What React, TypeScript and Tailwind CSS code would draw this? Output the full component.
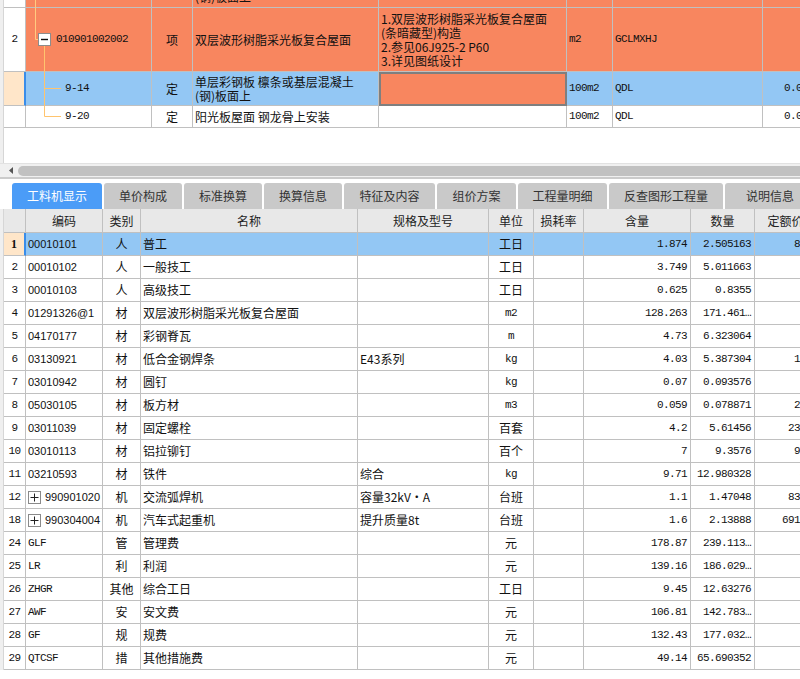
import React from 'react';

const cjk = "font-['Noto_Sans_CJK_SC',sans-serif] text-[12px]";
const mono = "font-['Liberation_Mono',monospace] text-[11px] tracking-[-0.6px]";
const sans = "font-['Liberation_Sans',sans-serif] text-[11px]";
const cell = 'shrink-0 h-full border-r border-b border-[#c0c0c0] flex items-center overflow-hidden whitespace-nowrap';

type Item = {
  n: string;
  code: string;
  latin?: boolean;
  plus?: boolean;
  cat: string;
  name: string;
  spec?: string;
  unit: string;
  amt: string;
  qty: string;
  price: string;
};

const items: Item[] = [
  { n: '1', code: '00010101', cat: '人', name: '普工', unit: '工日', amt: '1.874', qty: '2.505163', price: '87.1' },
  { n: '2', code: '00010102', cat: '人', name: '一般技工', unit: '工日', amt: '3.749', qty: '5.011663', price: '13' },
  { n: '3', code: '00010103', cat: '人', name: '高级技工', unit: '工日', amt: '0.625', qty: '0.8355', price: '162' },
  { n: '4', code: '01291326@1', cat: '材', name: '双层波形树脂采光板复合屋面', unit: 'm2', amt: '128.263', qty: '171.461…', price: '40' },
  { n: '5', code: '04170177', cat: '材', name: '彩钢脊瓦', unit: 'm', amt: '4.73', qty: '6.323064', price: '25' },
  { n: '6', code: '03130921', cat: '材', name: '低合金钢焊条', spec: 'E43系列', unit: 'kg', amt: '4.03', qty: '5.387304', price: '14.2' },
  { n: '7', code: '03010942', cat: '材', name: '圆钉', unit: 'kg', amt: '0.07', qty: '0.093576', price: '7' },
  { n: '8', code: '05030105', cat: '材', name: '板方材', unit: 'm3', amt: '0.059', qty: '0.078871', price: '2000' },
  { n: '9', code: '03011039', cat: '材', name: '固定螺栓', unit: '百套', amt: '4.2', qty: '5.61456', price: '230.0' },
  { n: '10', code: '03010113', cat: '材', name: '铝拉铆钉', unit: '百个', amt: '7', qty: '9.3576', price: '9.50' },
  { n: '11', code: '03210593', cat: '材', name: '铁件', spec: '综合', unit: 'kg', amt: '9.71', qty: '12.980328', price: '4.5' },
  { n: '12', code: '990901020', plus: true, cat: '机', name: '交流弧焊机', spec: '容量32kV·A', unit: '台班', amt: '1.1', qty: '1.47048', price: '83.27' },
  { n: '18', code: '990304004', plus: true, cat: '机', name: '汽车式起重机', spec: '提升质量8t', unit: '台班', amt: '1.6', qty: '2.13888', price: '691.61' },
  { n: '24', code: 'GLF', latin: true, cat: '管', name: '管理费', unit: '元', amt: '178.87', qty: '239.113…', price: '1' },
  { n: '25', code: 'LR', latin: true, cat: '利', name: '利润', unit: '元', amt: '139.16', qty: '186.029…', price: '1' },
  { n: '26', code: 'ZHGR', latin: true, cat: '其他', name: '综合工日', unit: '工日', amt: '9.45', qty: '12.63276', price: '1' },
  { n: '27', code: 'AWF', latin: true, cat: '安', name: '安文费', unit: '元', amt: '106.81', qty: '142.783…', price: '1' },
  { n: '28', code: 'GF', latin: true, cat: '规', name: '规费', unit: '元', amt: '132.43', qty: '177.032…', price: '1' },
  { n: '29', code: 'QTCSF', latin: true, cat: '措', name: '其他措施费', unit: '元', amt: '49.14', qty: '65.690352', price: '1' },
];

const tabs = [
  { label: '工料机显示', w: 'w-[90px]' },
  { label: '单价构成', w: 'w-[78px]' },
  { label: '标准换算', w: 'w-[78px]' },
  { label: '换算信息', w: 'w-[78px]' },
  { label: '特征及内容', w: 'w-[91px]' },
  { label: '组价方案', w: 'w-[79px]' },
  { label: '工程量明细', w: 'w-[89px]' },
  { label: '反查图形工程量', w: 'w-[114px]' },
  { label: '说明信息', w: 'w-[90px]' },
];

const isLatin = (s: string) => /^[A-Za-z0-9.]+$/.test(s);

const TreeLines = () => (
  <svg className="absolute left-0 top-0 pointer-events-none" width="80" height="130">
    <path d="M35.5 0V39.5H38" stroke="#ffcb80" fill="none" />
    <path d="M44.5 46V116.5H61M44.5 88.5H61" stroke="#ffc46e" fill="none" />
    <rect x="38.5" y="33.5" width="12" height="12" fill="#fff" stroke="#8c8c8c" />
    <path d="M41 39.5H48" stroke="#111" strokeWidth="1.4" />
  </svg>
);

const TopTable = () => (
  <div className="relative flex h-[163px] bg-white">
    <div className="w-[4px] shrink-0 bg-[#efefef] border-r border-[#d6d6d6]" />
    <div className="flex flex-col">
      <div className="flex h-[8px]">
        <div className={`${cell} w-[22px] bg-white`} />
        <div className={`${cell} w-[126px] bg-[#f8865f]`} />
        <div className={`${cell} w-[41px] bg-[#f8865f]`} />
        <div className={`${cell} w-[186px] bg-[#f8865f] !items-start`}>
          <div className={`${cjk} leading-[14px] -mt-[10px] pl-[2px]`}>(钢)板面上</div>
        </div>
        <div className={`${cell} w-[188px] bg-[#f8865f]`} />
        <div className={`${cell} w-[46px] bg-[#f8865f]`} />
        <div className={`${cell} w-[150px] bg-[#f8865f]`} />
        <div className={`${cell} w-[60px] bg-[#f8865f]`} />
      </div>

      <div className="flex h-[64px]">
        <div className={`${cell} w-[22px] bg-white justify-center ${mono}`}>2</div>
        <div className={`${cell} w-[126px] bg-[#f8865f] pl-[30px] ${mono}`}>010901002002</div>
        <div className={`${cell} w-[41px] bg-[#f8865f] justify-center ${cjk}`}>项</div>
        <div className={`${cell} w-[186px] bg-[#f8865f] pl-[2px] ${cjk}`}>双层波形树脂采光板复合屋面</div>
        <div className={`${cell} w-[188px] bg-[#f8865f] pl-[2px]`}>
          <div className={`${cjk} leading-[14px] flex flex-col`}>
            <span>1.双层波形树脂采光板复合屋面</span>
            <span>(条暗藏型)构造</span>
            <span>2.参见06J925-2 P60</span>
            <span>3.详见图纸设计</span>
          </div>
        </div>
        <div className={`${cell} w-[46px] bg-[#f8865f] pl-[2px] ${mono}`}>m2</div>
        <div className={`${cell} w-[150px] bg-[#f8865f] pl-[2px] ${mono}`}>GCLMXHJ</div>
        <div className={`${cell} w-[60px] bg-[#f8865f]`} />
      </div>

      <div className="flex h-[34px]">
        <div className={`${cell} w-[22px] bg-[#ffe6c9] border-r-2 border-r-[#3a8de9]`} />
        <div className={`${cell} w-[126px] bg-[#93c7f4] pl-[39px] ${mono}`}>9-14</div>
        <div className={`${cell} w-[41px] bg-[#93c7f4] justify-center ${cjk}`}>定</div>
        <div className={`${cell} w-[186px] bg-[#93c7f4] pl-[2px]`}>
          <div className={`${cjk} leading-[14px] flex flex-col`}>
            <span>单层彩钢板 檩条或基层混凝土</span>
            <span>(钢)板面上</span>
          </div>
        </div>
        <div className="shrink-0 h-full w-[188px] bg-[#f8865f] border-2 border-[#7f7f7f]" />
        <div className={`${cell} w-[46px] bg-[#93c7f4] pl-[2px] ${mono}`}>100m2</div>
        <div className={`${cell} w-[150px] bg-[#93c7f4] pl-[2px] ${mono}`}>QDL</div>
        <div className={`${cell} w-[60px] bg-[#93c7f4] justify-end pr-[2px] ${mono}`}>0.0128</div>
      </div>

      <div className="flex h-[22px]">
        <div className={`${cell} w-[22px] bg-white`} />
        <div className={`${cell} w-[126px] bg-white pl-[39px] ${mono}`}>9-20</div>
        <div className={`${cell} w-[41px] bg-white justify-center ${cjk}`}>定</div>
        <div className={`${cell} w-[186px] bg-white pl-[2px] ${cjk}`}>阳光板屋面 钢龙骨上安装</div>
        <div className={`${cell} w-[188px] bg-white`} />
        <div className={`${cell} w-[46px] bg-white pl-[2px] ${mono}`}>100m2</div>
        <div className={`${cell} w-[150px] bg-white pl-[2px] ${mono}`}>QDL</div>
        <div className={`${cell} w-[60px] bg-white justify-end pr-[2px] ${mono}`}>0.0531</div>
      </div>
    </div>
    <TreeLines />
  </div>
);

const ScrollBar = () => (
  <div>
    <div className="flex items-center h-[14px] bg-[#f0f0f0] border-t border-[#e2e2e2]">
      <svg className="ml-[9px]" width="4" height="7">
        <path d="M4 0V7L0 3.5Z" fill="#555" />
      </svg>
      <div className="ml-[5px] flex-1 h-[10px] rounded-l-full bg-[#c1c1c1]" />
    </div>
    <div className="h-[2px] bg-[#cbcbcb]" />
    <div className="h-[4px] bg-white" />
  </div>
);

const Tabs = () => (
  <div className="flex h-[26px] pl-[12px] gap-[2px] bg-white">
    {tabs.map((t, i) => (
      <div
        key={t.label}
        className={`${t.w} shrink-0 h-full rounded-t-[3px] flex items-center justify-center ${cjk} ${
          i === 0 ? 'bg-[#4b9cf7] text-white' : 'bg-[#c9c9c9] text-[#333]'
        }`}
      >
        {t.label}
      </div>
    ))}
  </div>
);

const headers = [
  { label: '', w: 'w-[22px]' },
  { label: '编码', w: 'w-[77px]' },
  { label: '类别', w: 'w-[38px]' },
  { label: '名称', w: 'w-[217px]' },
  { label: '规格及型号', w: 'w-[131px]' },
  { label: '单位', w: 'w-[45px]' },
  { label: '损耗率', w: 'w-[50px]' },
  { label: '含量', w: 'w-[107px]' },
  { label: '数量', w: 'w-[64px]' },
  { label: '定额价', w: 'w-[66px] pr-[4px]' },
];

const PlusBox = () => (
  <div className="w-[13px] h-[13px] shrink-0 border border-[#8a8a8a] bg-white flex items-center justify-center">
    <svg width="9" height="9">
      <path d="M0.5 4.5H8.5M4.5 0.5V8.5" stroke="#222" strokeWidth="1" />
    </svg>
  </div>
);

const BottomTable = () => (
  <div className="flex bg-white">
    <div className="w-[4px] shrink-0 bg-[#efefef] border-r border-[#d6d6d6]" />
    <div className="flex flex-col">
      <div className="flex h-[24px]">
        {headers.map((h, i) => (
          <div key={i} className={`${cell} ${h.w} bg-[#e8e8e8] justify-center text-[#222] ${cjk}`}>
            {h.label}
          </div>
        ))}
      </div>
      {items.map((r, i) => {
        const sel = i === 0;
        const bg = sel ? 'bg-[#93c7f4]' : 'bg-white';
        return (
          <div key={r.n} className="flex h-[23px] text-[#111]">
            <div
              className={`${cell} w-[22px] justify-center ${
                sel ? "bg-[#ffe6c9] border-r-2 border-r-[#3a8de9] font-['Liberation_Serif',serif] font-bold text-[12px]" : `bg-white ${mono}`
              }`}
            >
              {r.n}
            </div>
            <div className={`${cell} w-[77px] ${bg} pl-[2px] ${r.latin ? mono : sans}`}>
              {r.plus ? (
                <div className="flex items-center gap-[4px]">
                  <PlusBox />
                  <span>{r.code}</span>
                </div>
              ) : (
                r.code
              )}
            </div>
            <div className={`${cell} w-[38px] ${bg} justify-center ${cjk}`}>{r.cat}</div>
            <div className={`${cell} w-[217px] ${bg} pl-[2px] ${cjk}`}>{r.name}</div>
            <div className={`${cell} w-[131px] ${bg} pl-[2px] ${cjk}`}>{r.spec ?? ''}</div>
            <div className={`${cell} w-[45px] ${bg} justify-center ${isLatin(r.unit) ? mono : cjk}`}>{r.unit}</div>
            <div className={`${cell} w-[50px] ${bg}`} />
            <div className={`${cell} w-[107px] ${bg} justify-end pr-[3px] ${mono}`}>{r.amt}</div>
            <div className={`${cell} w-[64px] ${bg} justify-end pr-[3px] ${mono}`}>{r.qty}</div>
            <div className={`${cell} w-[66px] ${bg} justify-end pr-[2px] ${mono}`}>{r.price}</div>
          </div>
        );
      })}
    </div>
  </div>
);

const App: React.FC = () => {
  return (
    <div className="w-[800px] h-[679px] overflow-hidden bg-white text-[#111]">
      <TopTable />
      <ScrollBar />
      <Tabs />
      <BottomTable />
    </div>
  );
};

export default App;
